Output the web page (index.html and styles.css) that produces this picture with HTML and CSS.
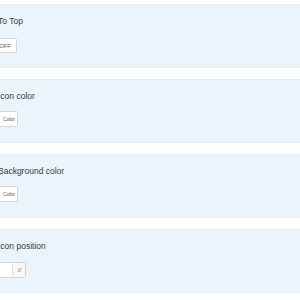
FILE: index.html
```html
<!DOCTYPE html>
<html lang="en">
<head>
  <meta charset="UTF-8">
  <title>Back To Top</title>
  <link rel="stylesheet" href="styles.css">
</head>
<body>
  <div class="panel">
    <div class="panel-body">
      <div class="label">To Top</div>
      <button class="btn toggle">OFF</button>
    </div>
  </div>

  <div class="panel">
    <div class="panel-body">
      <div class="label">Icon color</div>
      <button class="btn color">Color</button>
    </div>
  </div>

  <div class="panel">
    <div class="panel-body">
      <div class="label">Background color</div>
      <button class="btn color">Color</button>
    </div>
  </div>

  <div class="panel">
    <div class="panel-body">
      <div class="label">Icon position</div>
      <div class="select">
        <span class="select-value"></span>
        <span class="select-arrow">&#8693;</span>
      </div>
    </div>
  </div>
</body>
</html>
```

FILE: styles.css
```css
body {
  margin: 0;
  padding-top: 4px;
  font-family: "Liberation Sans", Arial, sans-serif;
  background-color: #fff;
  overflow: hidden;
}

.panel {
  background-color: #ebf3fb;
  border-top: 1px solid #e3eef7;
  border-bottom: 1px solid #e6eef6;
  height: 64px;
  margin-bottom: 11px;
  padding-top: 11px;
  box-sizing: border-box;
}

.panel-body {
  margin-left: -2px;
}

.label {
  font-size: 8.5px;
  line-height: 11px;
  color: #3a3a3a;
  margin-bottom: 11px;
}

.btn {
  font-family: "Liberation Sans", Arial, sans-serif;
  background-color: #fff;
  border: 1px solid #d6d6d6;
  border-radius: 2px;
  color: #555;
  padding: 0;
  display: block;
}

.toggle {
  font-size: 5.5px;
  width: 19px;
  height: 15px;
  padding-right: 5px;
}

.color {
  font-size: 5px;
  width: 20px;
  height: 16px;
  margin-top: -2px;
  padding-left: 2px;
}

.select {
  display: flex;
  width: 28px;
  height: 16px;
  margin-top: -1px;
  background-color: #fff;
  border: 1px solid #d6d6d6;
  border-radius: 2px;
  box-sizing: border-box;
}

.select-value {
  flex: 1;
}

.select-arrow {
  width: 12px;
  border-left: 1px solid #e2e2e2;
  font-size: 6px;
  line-height: 14px;
  text-align: center;
  color: #999;
  background-color: #f7f7f7;
}
```
